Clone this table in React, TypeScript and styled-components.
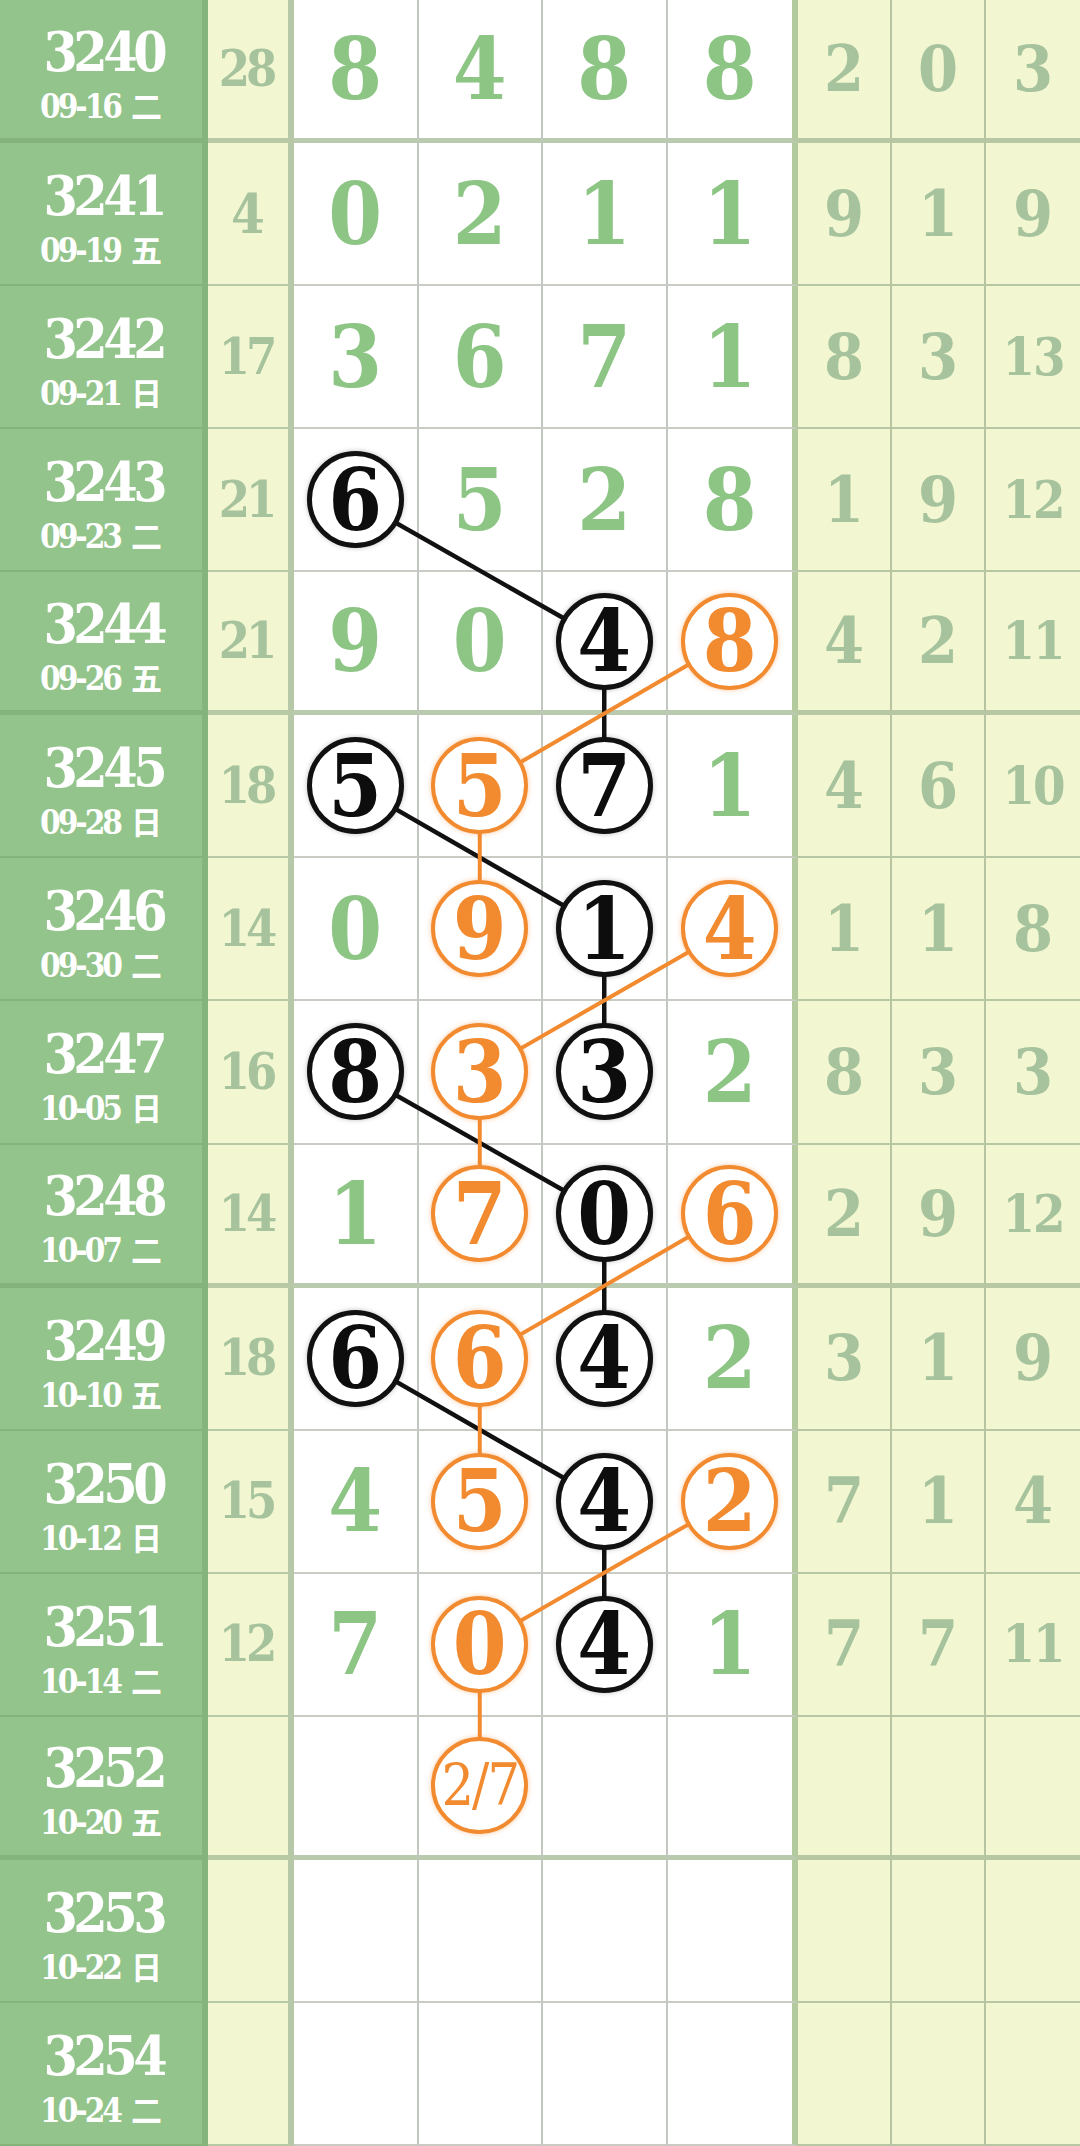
import styled, { createGlobalStyle } from "styled-components"

const GlobalStyle = createGlobalStyle`
    html, body {
        margin: 0;
        padding: 0;
        background: #ffffff;
    }
    body {
        font-family: "DejaVu Serif Condensed", "DejaVu Serif", "Noto Sans CJK SC", serif;
        font-stretch: condensed;
    }
`

const ROW_COUNT = 15
const ROW_H = 2146 / ROW_COUNT
const MAIN_LEFT = 294
const MAIN_CELL = 124.5

const Board = styled.div`
    position: relative;
    width: 1080px;
    height: 2146px;
    display: grid;
    grid-template-rows: repeat(${ROW_COUNT}, 1fr);
    overflow: hidden;
`

const Row = styled.div`
    display: grid;
    grid-template-columns: 208px 86px ${MAIN_CELL}px ${MAIN_CELL}px ${MAIN_CELL}px ${MAIN_CELL + 6}px 1fr 1fr 1fr;
    min-height: 0;
`

const Cell = styled.div<{ $thick?: boolean }>`
    box-sizing: border-box;
    display: flex;
    align-items: center;
    justify-content: center;
    min-width: 0;
    min-height: 0;
    border-bottom: ${({ $thick }) => ($thick ? "5px" : "2px")} solid #c4c9c0;
`

const LabelCell = styled(Cell)`
    flex-direction: column;
    gap: 10px;
    padding-top: 8px;
    background: #93c48b;
    color: #ffffff;
    border-right: 6px solid #85b57d;
    border-bottom-color: #84b37c;
`

const Period = styled.div`
    font-size: 55px;
    font-weight: 700;
    line-height: 1;
    letter-spacing: -4.5px;
    margin-right: -4.5px;
`

const DateLine = styled.div`
    font-size: 33px;
    font-weight: 700;
    line-height: 1;
    white-space: nowrap;
    letter-spacing: -3px;
`

const Week = styled.span`
    font-family: "Noto Sans CJK SC", sans-serif;
    font-size: 31px;
    font-weight: 700;
    letter-spacing: 0;
    margin-left: 11px;
`

const SumCell = styled(Cell)<{ $pair?: boolean }>`
    background: #f2f7d1;
    color: #a6c39d;
    font-size: ${({ $pair }) => ($pair ? "50px" : "54px")};
    font-weight: 700;
    line-height: 1;
    letter-spacing: ${({ $pair }) => ($pair ? "-4px" : "0")};
    text-indent: ${({ $pair }) => ($pair ? "-4px" : "0")};
    border-right: 6px solid #b6c8a7;
    border-bottom-color: #b7c9a5;
`

const MainCell = styled(Cell)<{ $last?: boolean }>`
    background: #ffffff;
    color: #8cc584;
    font-size: 86px;
    font-weight: 700;
    line-height: 1;
    border-right: ${({ $last }) => ($last ? "6px solid #b3ca9f" : "2px solid #c3c7c1")};
    border-bottom-color: ${({ $thick }) => ($thick ? "#bacaae" : "#c8ccc5")};
`

const TailCell = styled(Cell)<{ $last?: boolean; $pair?: boolean }>`
    background: #f2f7d1;
    color: #a6c39d;
    font-size: ${({ $pair }) => ($pair ? "52px" : "64px")};
    font-weight: 700;
    line-height: 1;
    letter-spacing: ${({ $pair }) => ($pair ? "-2px" : "0")};
    border-right: ${({ $last }) => ($last ? "none" : "2px solid #b6c4a1")};
    border-bottom-color: #b7c7a4;
`

const Ball = styled.div<{ $tone: "black" | "orange"; $small?: boolean }>`
    position: relative;
    z-index: 2;
    box-sizing: border-box;
    width: 97px;
    height: 97px;
    flex: none;
    border-radius: 50%;
    background: #ffffff;
    display: flex;
    align-items: center;
    justify-content: center;
    border: ${({ $tone }) => ($tone === "black" ? "5px solid #111111" : "4px solid #f28a30")};
    color: ${({ $tone }) => ($tone === "black" ? "#0d0d0d" : "#f28a30")};
    box-shadow: ${({ $tone }) =>
        $tone === "black" ? "0 0 5px rgba(0, 0, 0, 0.25)" : "0 0 5px rgba(242, 138, 48, 0.45)"};
    font-size: ${({ $small }) => ($small ? "57px" : "86px")};
    font-weight: ${({ $small }) => ($small ? 400 : 700)};
    letter-spacing: ${({ $small }) => ($small ? "-2px" : "0")};
    line-height: 1;
`

const Links = styled.svg`
    position: absolute;
    left: 0;
    top: 0;
    width: 1080px;
    height: 2146px;
    pointer-events: none;
    z-index: 1;
`

type Draw = {
    period: string
    date: string
    week: string
    sum: string
    nums: string[]
    marks: string
    tails: string[]
}

const draws: Draw[] = [
    { period: "3240", date: "09-16", week: "二", sum: "28", nums: ["8", "4", "8", "8"], marks: "....", tails: ["2", "0", "3"] },
    { period: "3241", date: "09-19", week: "五", sum: "4", nums: ["0", "2", "1", "1"], marks: "....", tails: ["9", "1", "9"] },
    { period: "3242", date: "09-21", week: "日", sum: "17", nums: ["3", "6", "7", "1"], marks: "....", tails: ["8", "3", "13"] },
    { period: "3243", date: "09-23", week: "二", sum: "21", nums: ["6", "5", "2", "8"], marks: "b...", tails: ["1", "9", "12"] },
    { period: "3244", date: "09-26", week: "五", sum: "21", nums: ["9", "0", "4", "8"], marks: "..bo", tails: ["4", "2", "11"] },
    { period: "3245", date: "09-28", week: "日", sum: "18", nums: ["5", "5", "7", "1"], marks: "bob.", tails: ["4", "6", "10"] },
    { period: "3246", date: "09-30", week: "二", sum: "14", nums: ["0", "9", "1", "4"], marks: ".obo", tails: ["1", "1", "8"] },
    { period: "3247", date: "10-05", week: "日", sum: "16", nums: ["8", "3", "3", "2"], marks: "bob.", tails: ["8", "3", "3"] },
    { period: "3248", date: "10-07", week: "二", sum: "14", nums: ["1", "7", "0", "6"], marks: ".obo", tails: ["2", "9", "12"] },
    { period: "3249", date: "10-10", week: "五", sum: "18", nums: ["6", "6", "4", "2"], marks: "bob.", tails: ["3", "1", "9"] },
    { period: "3250", date: "10-12", week: "日", sum: "15", nums: ["4", "5", "4", "2"], marks: ".obo", tails: ["7", "1", "4"] },
    { period: "3251", date: "10-14", week: "二", sum: "12", nums: ["7", "0", "4", "1"], marks: ".ob.", tails: ["7", "7", "11"] },
    { period: "3252", date: "10-20", week: "五", sum: "", nums: ["", "2/7", "", ""], marks: ".o..", tails: ["", "", ""] },
    { period: "3253", date: "10-22", week: "日", sum: "", nums: ["", "", "", ""], marks: "....", tails: ["", "", ""] },
    { period: "3254", date: "10-24", week: "二", sum: "", nums: ["", "", "", ""], marks: "....", tails: ["", "", ""] },
]

// [fromRow, fromCol, toRow, toCol]
const blackLinks = [
    [3, 0, 4, 2], [4, 2, 5, 2], [5, 0, 6, 2], [6, 2, 7, 2],
    [7, 0, 8, 2], [8, 2, 9, 2], [9, 0, 10, 2], [10, 2, 11, 2],
]
const orangeLinks = [
    [4, 3, 5, 1], [5, 1, 6, 1], [6, 3, 7, 1], [7, 1, 8, 1],
    [8, 3, 9, 1], [9, 1, 10, 1], [10, 3, 11, 1], [11, 1, 12, 1],
]

const isThick = (i: number) => i % 4 === 0

const cx = (col: number) => MAIN_LEFT + MAIN_CELL * col + (MAIN_CELL - 2) / 2
const cy = (row: number) => ROW_H * row + (ROW_H - (isThick(row) ? 5 : 2)) / 2

export default function App() {
    return (
        <>
            <GlobalStyle />
            <Board>
                {draws.map((d, i) => (
                    <Row key={d.period}>
                        <LabelCell $thick={isThick(i)}>
                            <Period>{d.period}</Period>
                            <DateLine>
                                {d.date}
                                <Week>{d.week}</Week>
                            </DateLine>
                        </LabelCell>
                        <SumCell $thick={isThick(i)} $pair={d.sum.length > 1}>{d.sum}</SumCell>
                        {d.nums.map((n, c) => {
                            const mark = d.marks[c]
                            return (
                                <MainCell key={c} $thick={isThick(i)} $last={c === 3}>
                                    {mark === "b" && <Ball $tone="black">{n}</Ball>}
                                    {mark === "o" && (
                                        <Ball $tone="orange" $small={n.length > 1}>{n}</Ball>
                                    )}
                                    {mark === "." && n}
                                </MainCell>
                            )
                        })}
                        {d.tails.map((t, c) => (
                            <TailCell key={c} $thick={isThick(i)} $last={c === 2} $pair={t.length > 1}>
                                {t}
                            </TailCell>
                        ))}
                    </Row>
                ))}
                <Links viewBox="0 0 1080 2146">
                    {blackLinks.map(([r1, c1, r2, c2], k) => (
                        <line key={"b" + k} x1={cx(c1)} y1={cy(r1)} x2={cx(c2)} y2={cy(r2)}
                            stroke="#111111" strokeWidth={4.5} />
                    ))}
                    {orangeLinks.map(([r1, c1, r2, c2], k) => (
                        <line key={"o" + k} x1={cx(c1)} y1={cy(r1)} x2={cx(c2)} y2={cy(r2)}
                            stroke="#f28a30" strokeWidth={4} />
                    ))}
                </Links>
            </Board>
        </>
    )
}
